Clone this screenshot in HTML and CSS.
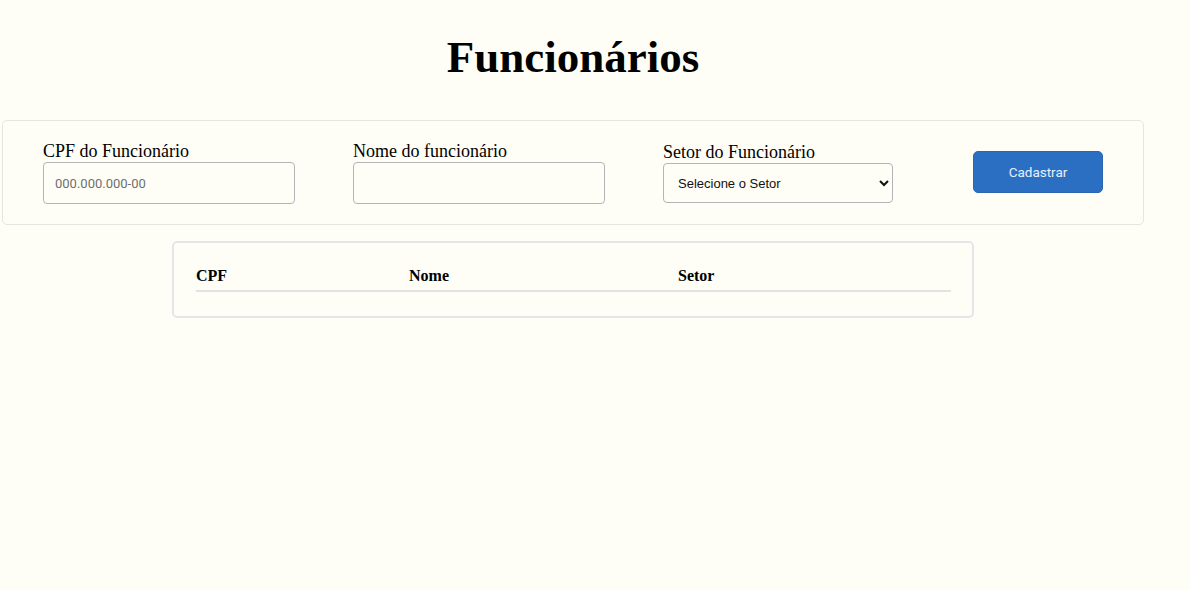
FILE: index.html
```html
<!DOCTYPE html>
<html lang="pt-BR">
<head>
<meta charset="utf-8">
<title>Funcionários</title>
<link rel="stylesheet" href="styles.css">
</head>
<body>
<main class="page">
  <h1 class="title">Funcionários</h1>
  <form class="form-card">
    <div class="field">
      <label class="field-label" for="cpf">CPF do Funcionário</label>
      <input class="field-input" id="cpf" type="text" placeholder="000.000.000-00">
    </div>
    <div class="field">
      <label class="field-label" for="nome">Nome do funcionário</label>
      <input class="field-input" id="nome" type="text">
    </div>
    <div class="field">
      <label class="field-label" for="setor">Setor do Funcionário</label>
      <select class="field-select" id="setor">
        <option>Selecione o Setor</option>
      </select>
    </div>
    <button class="btn-submit" type="button">Cadastrar</button>
  </form>
  <section class="table-card">
    <table class="table">
      <colgroup>
        <col class="col-cpf">
        <col class="col-nome">
        <col class="col-setor">
      </colgroup>
      <thead>
        <tr>
          <th>CPF</th>
          <th>Nome</th>
          <th>Setor</th>
        </tr>
      </thead>
      <tbody></tbody>
    </table>
  </section>
</main>
</body>
</html>
```

FILE: styles.css
```css
html, body {
  margin: 0;
  padding: 0;
  background: #fefef7;
}

body {
  font-family: "Liberation Serif", "Times New Roman", serif;
  color: #000;
}

.page {
  width: 1142px;
  margin-left: 2px;
  display: flex;
  flex-direction: column;
  align-items: center;
}

.title {
  margin: 31px 0 37px;
  font-size: 45px;
  line-height: 52px;
  font-weight: bold;
  text-align: center;
}

.form-card {
  box-sizing: border-box;
  width: 1142px;
  height: 105px;
  border: 1px solid #e6e6dc;
  border-radius: 5px;
  padding: 0 40px;
  display: flex;
  align-items: center;
  gap: 58px;
}

.field {
  display: flex;
  flex-direction: column;
}

.field-label {
  font-size: 18px;
  line-height: 21px;
}

.field-input {
  box-sizing: border-box;
  width: 252px;
  height: 42px;
  margin: 0;
  padding: 0 11px;
  border: 1px solid #b4b4b8;
  border-radius: 4px;
  background: transparent;
  font-family: "Roboto", "Liberation Sans", Arial, sans-serif;
  font-size: 13px;
  color: #222;
}

.field-input::placeholder {
  color: #6f6f6f;
}

.field-select {
  box-sizing: border-box;
  width: 230px;
  height: 40px;
  margin: 0;
  padding: 0 10px;
  border: 1px solid #b4b4b8;
  border-radius: 4px;
  background: transparent;
  font-family: "Liberation Sans", Arial, sans-serif;
  font-size: 13px;
  color: #111;
}

.btn-submit {
  margin-left: 22px;
  margin-bottom: 1px;
  width: 130px;
  height: 42px;
  border: 1px solid #2a66b2;
  border-radius: 5px;
  background: #2b6fc2;
  color: #e8f0fb;
  font-family: "Roboto", "Liberation Sans", Arial, sans-serif;
  font-size: 13.5px;
  cursor: pointer;
}

.table-card {
  box-sizing: border-box;
  align-self: flex-start;
  width: 802px;
  margin: 16px 0 0 170px;
  padding: 22px 21px 24px 22px;
  border: 2px solid #e6e6ea;
  border-radius: 5px;
}

.table {
  width: 755px;
  table-layout: fixed;
  border-collapse: collapse;
}

.col-cpf { width: 213px; }
.col-nome { width: 269px; }
.col-setor { width: 273px; }

.table th {
  text-align: left;
  padding: 2px 0 5px;
  font-size: 16px;
  line-height: 18px;
  font-weight: bold;
  border-bottom: 2px solid #e3e3e3;
}
```
